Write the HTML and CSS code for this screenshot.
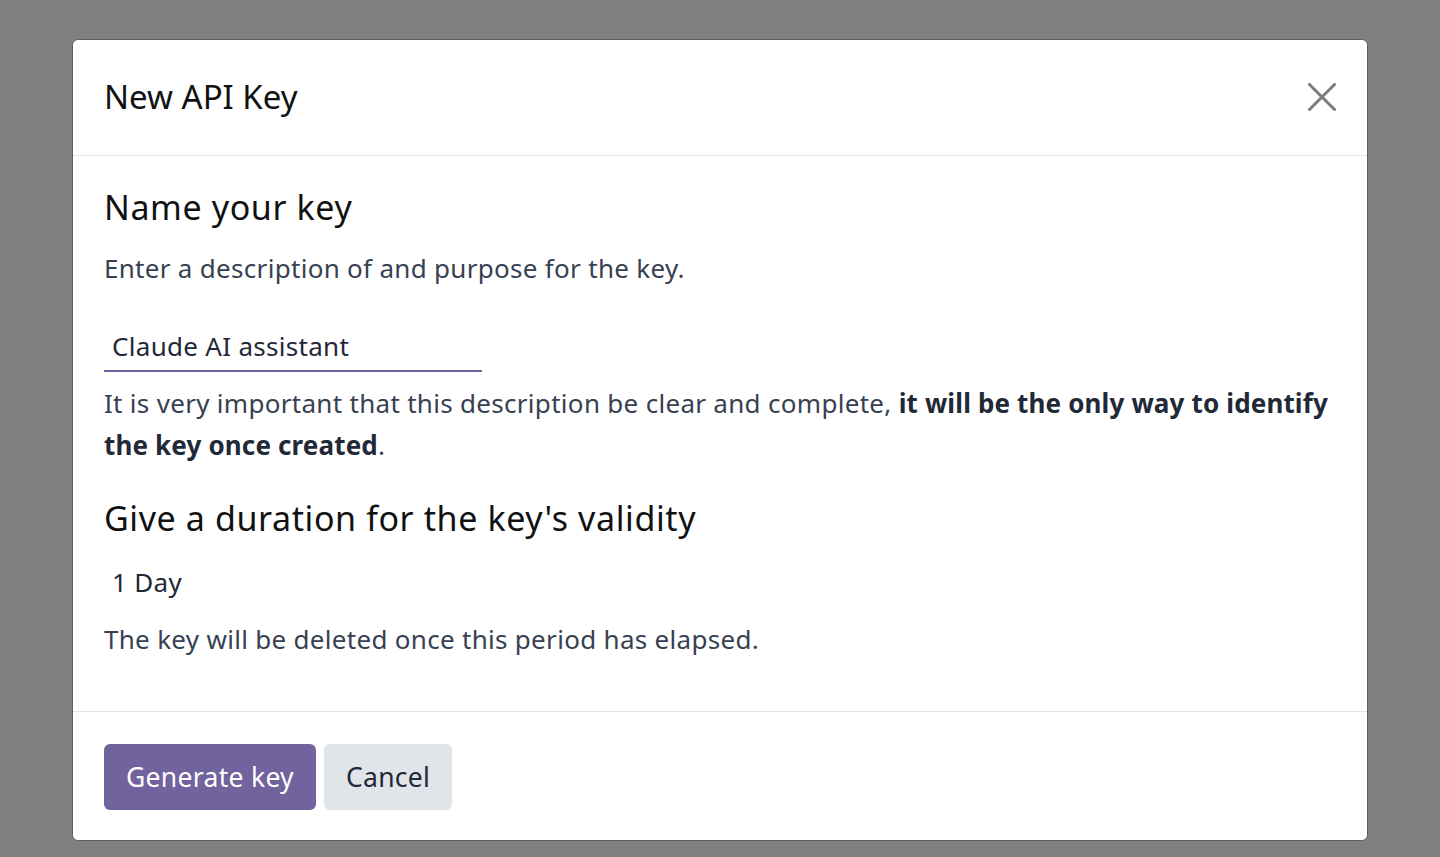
FILE: index.html
```html
<!DOCTYPE html>
<html lang="en">
<head>
<meta charset="utf-8">
<title>New API Key</title>
<link rel="stylesheet" href="styles.css">
</head>
<body>
<div class="modal">
  <header class="modal-header">
    <h4 class="modal-title">New API Key</h4>
    <button class="btn-close" aria-label="Close">
      <svg width="28" height="28" viewBox="0 0 28 28"><path d="M1.5 1.5 L26.5 26.5 M26.5 1.5 L1.5 26.5" stroke="#7b7b7b" stroke-width="3" stroke-linecap="round" fill="none"/></svg>
    </button>
  </header>
  <main class="modal-body">
    <h3 class="section-title">Name your key</h3>
    <p class="lead-text">Enter a description of and purpose for the key.</p>
    <div class="field-input">Claude AI assistant</div>
    <p class="help-text">It is very important that this description be clear and complete, <b>it will be the only way to identify the key once created</b>.</p>
    <h3 class="section-title second">Give a duration for the key's validity</h3>
    <div class="field-select">1 Day</div>
    <p class="note-text">The key will be deleted once this period has elapsed.</p>
  </main>
  <footer class="modal-footer">
    <button class="btn btn-primary">Generate key</button>
    <button class="btn btn-secondary">Cancel</button>
  </footer>
</div>
</body>
</html>
```
FILE: styles.css
```css
html, body {
  margin: 0;
  padding: 0;
}
body {
  background: #808080;
  font-family: "Noto Sans", "Open Sans", sans-serif;
  color: #374151;
  height: 857px;
  overflow: hidden;
}
.modal {
  box-sizing: border-box;
  margin: 39px 72px 0 72px;
  height: 802px;
  background: #ffffff;
  border: 1px solid #5f5f5f;
  border-radius: 6px;
  display: flex;
  flex-direction: column;
}
.modal-header {
  box-sizing: border-box;
  height: 116px;
  padding: 0 31px 2px 31px;
  display: flex;
  align-items: center;
  justify-content: space-between;
  border-bottom: 1px solid #dee2e6;
}
.modal-title {
  margin: 0;
  font-size: 33px;
  font-weight: 400;
  color: #111111;
  line-height: 40px;
}
.btn-close {
  border: 0;
  background: transparent;
  padding: 0;
  width: 28px;
  height: 28px;
  display: flex;
}
.modal-body {
  flex: 1;
  padding: 32px 31px 0 31px;
  font-size: 26px;
  letter-spacing: 0.3px;
}
.section-title {
  margin: 0;
  font-size: 34px;
  font-weight: 400;
  line-height: 38px;
  letter-spacing: 0.6px;
  color: #111111;
}
.section-title.second {
  margin-top: 33px;
}
.lead-text {
  margin: 21px 0 0 0;
  line-height: 42px;
}
.field-input {
  box-sizing: border-box;
  margin-top: 36px;
  width: 378px;
  padding: 0 8px 3px 8px;
  line-height: 42px;
  color: #1f2937;
  border-bottom: 2px solid #71639e;
}
.help-text {
  margin: 10px 0 0 0;
  line-height: 42px;
}
.help-text b {
  font-weight: 700;
  color: #1f2937;
  letter-spacing: 0.15px;
}
.field-select {
  margin-top: 24px;
  padding-left: 8px;
  line-height: 42px;
  color: #1f2937;
}
.note-text {
  margin: 15px 0 0 0;
  line-height: 42px;
}
.modal-footer {
  box-sizing: border-box;
  height: 129px;
  padding: 32px 31px 0 31px;
  border-top: 1px solid #dee2e6;
  display: flex;
  gap: 8px;
  align-items: flex-start;
}
.btn {
  height: 66px;
  padding: 0 22px;
  border: 0;
  border-radius: 6px;
  font-family: inherit;
  font-size: 26.5px;
  letter-spacing: 0.3px;
}
.btn-primary {
  background: #71639e;
  color: #ffffff;
}
.btn-secondary {
  background: #e1e4e8;
  color: #1f2937;
}
```
